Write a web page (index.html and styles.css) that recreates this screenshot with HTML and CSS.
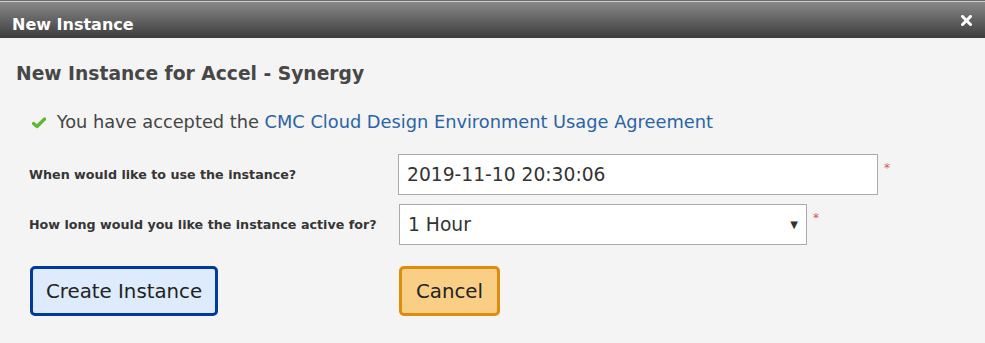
FILE: index.html
```html
<html lang="en">
<head>
    <meta charset="UTF-8">
    <title>New Instance</title>
    <link rel="stylesheet" href="styles.css">
</head>
<body>
<div class="dialog">
    <div class="titlebar">
        <span class="title">New Instance</span>
        <svg class="close" width="11" height="11" viewBox="0 0 11 11">
            <path d="M1.5 1.5 L9.5 9.5 M9.5 1.5 L1.5 9.5" stroke="#fff" stroke-width="3" stroke-linecap="square"/>
        </svg>
    </div>
    <div class="content">
        <h2 class="heading">New Instance for Accel - Synergy</h2>
        <p class="agreement">
            <svg class="check" width="14" height="12" viewBox="0 0 14 12">
                <path d="M1.5 6.5 L5 9.5 L12.5 2" fill="none" stroke="#5cb82c" stroke-width="3.2" stroke-linecap="round" stroke-linejoin="round"/>
            </svg>
            You have accepted the <a href="#">CMC Cloud Design Environment Usage Agreement</a>
        </p>
        <form class="form">
            <label class="label">When would like to use the instance?</label>
            <div class="field">
                <input class="input" type="text" value="2019-11-10 20:30:06">
                <span class="req">*</span>
            </div>
            <label class="label">How long would you like the instance active for?</label>
            <div class="field">
                <div class="select">
                    <span>1 Hour</span>
                    <span class="arrow">&#9660;</span>
                </div>
                <span class="req">*</span>
            </div>
            <div class="btn-cell">
                <button type="button" class="btn btn-create">Create Instance</button>
            </div>
            <div class="btn-cell">
                <button type="button" class="btn btn-cancel">Cancel</button>
            </div>
        </form>
    </div>
</div>
</body>
</html>
```

FILE: styles.css
```css
body {
    margin: 0;
    padding: 0;
    font-family: "DejaVu Sans", Verdana, sans-serif;
    background: #f4f4f4;
}

.dialog {
    width: 985px;
    height: 343px;
    background: #f4f4f4;
}

.titlebar {
    height: 34px;
    border-top: 1px solid #6a6a6a;
    box-shadow: inset 0 1px 0 #cfcfcf;
    background: linear-gradient(#8a8a8a, #3d3d3d);
    display: flex;
    align-items: flex-end;
    justify-content: space-between;
    padding: 0 13px 3px 12px;
    box-sizing: content-box;
}

.title {
    color: #fff;
    font-weight: bold;
    font-size: 16px;
    line-height: 21px;
}

.close {
    align-self: flex-start;
    margin-top: 14px;
}

.content {
    padding: 0 16px;
}

.heading {
    margin: 24px 0 0 0;
    font-size: 18.7px;
    line-height: 24px;
    font-weight: bold;
    color: #474747;
}

.agreement {
    margin: 24px 0 0 16px;
    font-size: 17.8px;
    line-height: 24px;
    color: #444;
}

.agreement a {
    color: #2a63a8;
    text-decoration: none;
}

.check {
    margin-right: 5px;
    vertical-align: -1px;
}

.form {
    display: grid;
    grid-template-columns: 369px auto;
    row-gap: 9px;
    margin: 20px 0 0 13px;
    align-items: center;
}

.label {
    font-size: 12.7px;
    font-weight: bold;
    color: #363636;
}

.field {
    display: flex;
    align-items: flex-start;
}

.input {
    width: 480px;
    height: 41px;
    box-sizing: border-box;
    border: 1px solid #aaa;
    background: #fff;
    padding: 0 8px;
    font-family: "DejaVu Sans", Verdana, sans-serif;
    font-size: 18.7px;
    color: #333;
    margin: 0;
}

.select {
    width: 408px;
    height: 41px;
    box-sizing: border-box;
    border: 1px solid #aaa;
    background: #fff;
    padding: 0 8px;
    font-size: 18.7px;
    color: #333;
    display: flex;
    align-items: center;
    justify-content: space-between;
    margin-left: 1px;
}

.arrow {
    font-size: 10px;
    color: #333;
}

.req {
    color: #d9534f;
    font-size: 12px;
    margin: 7px 0 0 6px;
}

.btn-cell {
    margin-top: 12px;
}

.btn {
    height: 50px;
    border-radius: 5px;
    font-family: "DejaVu Sans", Verdana, sans-serif;
    font-size: 19.8px;
    color: #222;
    padding: 0 13px;
    cursor: pointer;
}

.btn-create {
    margin-left: 1px;
    border: 3px solid #003a9e;
    background: #deebfd;
}

.btn-cancel {
    margin-left: 1px;
    padding: 0 14px;
    border: 3px solid #e08c0b;
    background: #f9cf86;
}
```
